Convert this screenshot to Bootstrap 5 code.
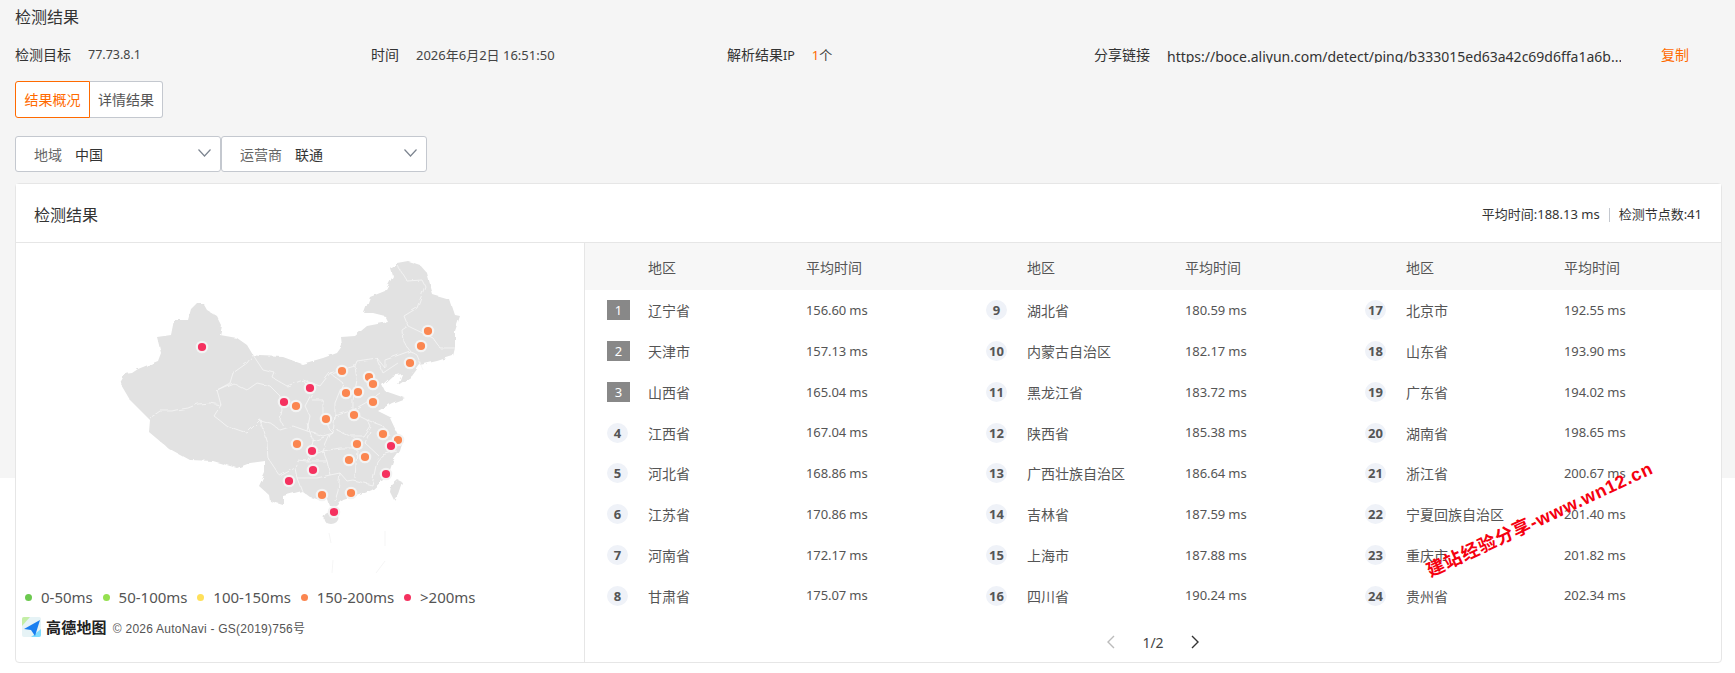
<!doctype html>
<html lang="zh-CN">

<head>
  <meta charset="utf-8" />
  <meta name="viewport" content="width=device-width, initial-scale=1" />
  <title>检测结果</title>
  <link href="https://cdn.jsdelivr.net/npm/bootstrap@5.3.5/dist/css/bootstrap.min.css" rel="stylesheet" />
  <style>
    body {
      width: 1735px;
      height: 673px;
      overflow: hidden;
      position: relative;
      background: linear-gradient(#f5f5f5 478px, #fff 478px);
      font-family: "Noto Sans", "Noto Sans CJK SC", sans-serif;
      font-size: 14px;
      color: #333;
    }

    .page-wrap { padding: 5px 13px 0 15px; }
    .page-title { font-size: 16px; line-height: 24px; height: 24px; margin-bottom: 14px; }

    .info-row { height: 24px; line-height: 24px; margin-bottom: 14px; }
    .info-cell { width: 356px; display: flex; }
    .info-key { margin-right: 17px; }
    .info-key small { font-size: 12.5px; }
    .info-val { font-size: 13px; color: #444; }
    .info-val.ip-val { font-size: 12.5px; }
    .orange-num { color: #ff6a00; }
    .info-cell.share { width: 600px; margin-left: 11px; }
    .share-url {
      width: 454px;
      height: 17px;
      line-height: 21px;
      margin-top: 3px;
      overflow: hidden;
      white-space: nowrap;
      color: #333;
    }
    .copy-link { color: #ff6a00; margin-left: 40px; text-decoration: none; }

    .tab-btn {
      height: 37px;
      width: 73px;
      padding: 0;
      font-size: 14px;
      line-height: 35px;
      text-align: center;
      background: #fff;
      border: 1px solid #c4c8cf;
      color: #555;
    }
    .tab-btn.on { width: 75px; border-color: #ff6a00; color: #ff6a00; border-radius: 3px 0 0 3px; }
    .tab-btn.off { border-left: 0; border-radius: 0 3px 3px 0; }

    .filter-row { margin-top: 18px; margin-bottom: 11px; }
    .filter-box {
      width: 206px;
      height: 36px;
      background: #fff;
      border: 1px solid #c4c8cf;
      border-radius: 3px;
      padding-left: 18px;
      display: flex;
      align-items: center;
      position: relative;
    }
    .filter-key { color: #666; margin-right: 13px; }
    .filter-val { color: #333; }
    .filter-arrow { position: absolute; right: 9px; top: 12px; }

    .result-card { height: 480px; border-color: #e6e6e6; border-radius: 4px; width: 1707px; }
    .result-head {
      height: 61px;
      padding: 4px 19px 0 18px;
      background: #fff;
      border-bottom: 1px solid #e6e6e6;
    }
    .result-title { font-size: 16px; }
    .result-stat { font-size: 13px; color: #333; }
    .stat-sep { width: 1px; height: 14px; background: #c4c8cf; margin: 0 9px; }

    .map-side { width: 569px; border-right: 1px solid #e6e6e6; flex: none; }
    .map-svg { display: block; overflow: visible; }
    .legend-row { height: 36px; padding: 2px 0 0 9px; font-size: 15px; color: #555; }
    .legend-dot { width: 7px; height: 7px; border-radius: 50%; margin-right: 9px; }
    .legend-item { display: flex; align-items: center; margin-right: 9.8px; }
    .dot-a { background: #6cc94f; }
    .dot-b { background: #95e04f; }
    .dot-c { background: #ffe05a; }
    .dot-d { background: #fb8650; }
    .dot-e { background: #f5315f; }
    .amap-row { padding-left: 6px; height: 26px; }
    .amap-name { font-weight: 700; font-size: 15px; color: #222; margin: 0 6px 0 5px; letter-spacing: .2px; }
    .amap-copy { font-family: "Liberation Sans", sans-serif; font-size: 12px; color: #555; letter-spacing: .25px; margin-top: 4px; }

    .list-side { flex: 1 1 auto; min-width: 0; }
    .list-head { height: 47px; background: #f7f7f7; padding-left: 22px; }
    .list-line { height: 40.75px; padding-left: 22px; }
    .rank-cell { width: 379px; display: flex; align-items: center; flex: none; }
    .rank-slot { width: 41px; flex: none; }
    .rank-name { width: 158px; flex: none; color: #555; padding-top: 1px; }
    .rank-time { font-size: 13px; color: #555; letter-spacing: -.1px; padding-top: 1px; }
    .rank-sq, .rank-dot {
      display: block;
      height: 20px;
      line-height: 20px;
      text-align: center;
      font-size: 13px;
    }
    .rank-sq { width: 23px; background: #888; color: #fff; }
    .rank-dot { width: 21px; border-radius: 50%; background: #eff2f8; color: #555; font-weight: 700; }

    .pager-row { height: 46px; padding-top: 6px; gap: 27px; }
    .pager-num { font-size: 14px; color: #444; }

    .stamp {
      position: absolute;
      left: 1540px;
      top: 520px;
      transform: translate(-50%, -50%) rotate(-25deg);
      white-space: nowrap;
      color: #f5000f;
      font-family: "Liberation Sans", "Noto Sans CJK SC", sans-serif;
      font-size: 18px;
      font-weight: 700;
      letter-spacing: .9px;
    }
  </style>
</head>

<body>
  <div class="page-wrap">
    <div class="page-title">检测结果</div>

    <div class="info-row d-flex">
      <div class="info-cell"><span class="info-key">检测目标</span><span class="info-val ip-val">77.73.8.1</span></div>
      <div class="info-cell"><span class="info-key">时间</span><span class="info-val">2026年6月2日 16:51:50</span></div>
      <div class="info-cell"><span class="info-key">解析结果<small>IP</small></span><span class="info-val"><span class="orange-num">1</span>个</span></div>
      <div class="info-cell share">
        <span class="info-key">分享链接</span>
        <div class="share-url">https://boce.aliyun.com/detect/ping/b333015ed63a42c69d6ffa1a6b...</div>
        <a class="copy-link" href="#">复制</a>
      </div>
    </div>

    <div class="d-flex">
      <button class="tab-btn on" type="button">结果概况</button>
      <button class="tab-btn off" type="button">详情结果</button>
    </div>

    <div class="d-flex filter-row">
      <div class="filter-box">
        <span class="filter-key">地域</span><span class="filter-val">中国</span>
        <svg class="filter-arrow" width="13" height="8" viewBox="0 0 13 8"><path d="M.5.5l6 6.5 6-6.5" fill="none" stroke="#7d8590" stroke-width="1.2"/></svg>
      </div>
      <div class="filter-box">
        <span class="filter-key">运营商</span><span class="filter-val">联通</span>
        <svg class="filter-arrow" width="13" height="8" viewBox="0 0 13 8"><path d="M.5.5l6 6.5 6-6.5" fill="none" stroke="#7d8590" stroke-width="1.2"/></svg>
      </div>
    </div>

    <div class="card result-card">
      <div class="result-head d-flex align-items-center justify-content-between">
        <span class="result-title">检测结果</span>
        <span class="result-stat d-flex align-items-center">平均时间:188.13 ms<i class="stat-sep"></i>检测节点数:41</span>
      </div>

      <div class="d-flex flex-grow-1">
        <div class="map-side">
          <svg class="map-svg" width="568" height="335" viewBox="16 245 568 335">
            <defs>
              <filter id="rough" x="-5%" y="-5%" width="110%" height="110%">
                <feTurbulence type="fractalNoise" baseFrequency=".13" numOctaves="2" seed="4"/>
                <feDisplacementMap in="SourceGraphic" scale="4"/>
              </filter>
            </defs>
            <g filter="url(#rough)">
              <path fill="#e2e2e2" d="M120 385 125 376 132 375 138 371 158 363 161 355 157 339 171 337 174 322 188 322 191 311 197 305 203 305 207 312 217 318 222 328 220 337 237 340 247 347 253 357 260 358 283 359 302 366 323 360 337 355 342 348 341 339 355 338 367 328 388 324 385 318 373 315 364 315 370 299 385 293 393 278 391 271 397 265 408 263 420 267 427 275 433 297 450 302 455 317 460 318 455 333 455 350 453 358 437 363 420 367 412 378 398 387 402 376 392 378 382 387 385 393 405 400 392 405 378 413 392 420 390 420 398 437 403 443 400 453 393 463 390 472 383 482 372 492 360 497 343 502 337 508 330 508 328 502 320 502 310 499 302 493 283 498 283 507 270 503 269 497 259 488 265 475 265 463 250 465 237 470 213 463 190 462 168 450 149 434 150 422 130 402Z"/>
              <ellipse cx="331" cy="520" rx="7.5" ry="6" fill="#e2e2e2"/>
              <path fill="#e2e2e2" d="M398 482 402 484 398 496 394 502 390 494 391 488Z"/>
              <g fill="none" stroke="#f6f6f6" stroke-width=".8" stroke-linejoin="round">
                <path d="M150 420 160 413 172 413 176 412 188 410 198 406 210 405 221 407 214 418 227 428 247 435 260 422 267 445 268 462"/>
                <path d="M217 392 230 385 233 375 247 365 253 357 263 372 275 375 273 380 287 388 303 382 312 395 305 408 310 418 307 433"/>
                <path d="M221 407 217 392 233 385 247 392 257 385 270 388 280 398 282 412 280 422 283 428"/>
                <path d="M260 422 270 425 280 432 293 428 307 433 323 438 333 435"/>
                <path d="M312 402 323 402 323 418 330 432 333 435 330 437 323 453 327 463 330 477 340 475 347 483 353 482 372 487 377 463 382 457 397 453"/>
                <path d="M303 382 320 388 330 375 355 368 357 363 377 360 383 375 398 365"/>
                <path d="M335 422 335 405 343 385 330 375"/>
                <path d="M355 368 357 382 353 402 353 412 335 418 333 435"/>
                <path d="M353 415 367 422 370 428 363 438 350 438 337 432"/>
                <path d="M353 412 367 404 380 395"/>
                <path d="M367 422 383 428 390 438"/>
                <path d="M370 433 365 445 378 457"/>
                <path d="M323 453 340 450 363 450"/>
                <path d="M357 452 355 480"/>
                <path d="M297 480 317 480 330 477"/>
                <path d="M340 475 338 493 335 503"/>
                <path d="M295 470 297 462 307 463 327 463"/>
                <path d="M268 460 280 478 295 470 297 480 302 493"/>
                <path d="M307 463 310 458 323 453"/>
                <path d="M313 443 330 437"/>
                <path d="M307 425 313 443 310 458"/>
                <path d="M397 267 407 283 422 282 425 288 417 310 404 318 408 328 433 340 440 350 455 350"/>
                <path d="M408 328 402 332 403 343 410 353 417 357 423 372"/>
                <path d="M410 353 385 362 385 370 377 360"/>
              </g>
            </g>
            <g fill="none" stroke="#f3f3f3" stroke-width=".8">
              <path d="M329 535 331 545"/>
              <path d="M385 533 385 548"/>
              <path d="M333 562 332 575"/>
              <path d="M385 563 376 575"/>
            </g>
            <g fill="#fb8650" stroke="#f3f3f3" stroke-width="2.2">
              <circle cx="296" cy="408" r="5.2"/><circle cx="326" cy="421" r="5.2"/><circle cx="354" cy="417" r="5.2"/>
              <circle cx="373" cy="404" r="5.2"/><circle cx="383" cy="436" r="5.2"/><circle cx="398" cy="442" r="5.2"/>
              <circle cx="357" cy="446" r="5.2"/><circle cx="297" cy="446" r="5.2"/><circle cx="365" cy="459" r="5.2"/>
              <circle cx="349" cy="462" r="5.2"/><circle cx="351" cy="495" r="5.2"/><circle cx="322" cy="497" r="5.2"/>
              <circle cx="428" cy="333" r="5.2"/><circle cx="421" cy="348" r="5.2"/><circle cx="410" cy="365" r="5.2"/>
              <circle cx="342" cy="373" r="5.2"/><circle cx="369" cy="379" r="5.2"/><circle cx="373" cy="386" r="5.2"/>
              <circle cx="346" cy="395" r="5.2"/><circle cx="358" cy="394" r="5.2"/>
            </g>
            <g fill="#f5315f" stroke="#f3f3f3" stroke-width="2.2">
              <circle cx="202" cy="349" r="5.2"/><circle cx="310" cy="390" r="5.2"/><circle cx="284" cy="404" r="5.2"/>
              <circle cx="391" cy="448" r="5.2"/><circle cx="312" cy="453" r="5.2"/><circle cx="313" cy="472" r="5.2"/>
              <circle cx="386" cy="476" r="5.2"/><circle cx="289" cy="483" r="5.2"/><circle cx="334" cy="514" r="5.2"/>
            </g>
          </svg>

          <div class="legend-row d-flex align-items-center">
            <div class="legend-item"><i class="legend-dot dot-a"></i>0-50ms</div>
            <div class="legend-item"><i class="legend-dot dot-b"></i>50-100ms</div>
            <div class="legend-item"><i class="legend-dot dot-c"></i>100-150ms</div>
            <div class="legend-item"><i class="legend-dot dot-d"></i>150-200ms</div>
            <div class="legend-item"><i class="legend-dot dot-e"></i>&gt;200ms</div>
          </div>

          <div class="amap-row d-flex align-items-center">
            <svg width="19" height="20" viewBox="0 0 19 20">
              <rect width="19" height="20" rx="2" fill="#e6f3f6"/>
              <path d="M0 2a2 2 0 0 1 2-2h6L0 9z" fill="#c4eea6"/>
              <path d="M19 12v6a2 2 0 0 1-2 2H9z" fill="#7edcff"/>
              <path d="M2 12 18 3 13 19 9 13z" fill="#1a7ff0"/>
            </svg>
            <span class="amap-name">高德地图</span>
            <span class="amap-copy">© 2026 AutoNavi - GS(2019)756号</span>
          </div>
        </div>

        <div class="list-side">
          <div class="list-head d-flex align-items-center">
            <div class="rank-cell"><span class="rank-slot"></span><span class="rank-name">地区</span><span class="rank-name">平均时间</span></div>
            <div class="rank-cell"><span class="rank-slot"></span><span class="rank-name">地区</span><span class="rank-name">平均时间</span></div>
            <div class="rank-cell"><span class="rank-slot"></span><span class="rank-name">地区</span><span class="rank-name">平均时间</span></div>
          </div>

          <div class="list-line d-flex">
            <div class="rank-cell"><span class="rank-slot"><b class="rank-sq fw-normal">1</b></span><span class="rank-name">辽宁省</span><span class="rank-time">156.60 ms</span></div>
            <div class="rank-cell"><span class="rank-slot"><b class="rank-dot">9</b></span><span class="rank-name">湖北省</span><span class="rank-time">180.59 ms</span></div>
            <div class="rank-cell"><span class="rank-slot"><b class="rank-dot">17</b></span><span class="rank-name">北京市</span><span class="rank-time">192.55 ms</span></div>
          </div>
          <div class="list-line d-flex">
            <div class="rank-cell"><span class="rank-slot"><b class="rank-sq fw-normal">2</b></span><span class="rank-name">天津市</span><span class="rank-time">157.13 ms</span></div>
            <div class="rank-cell"><span class="rank-slot"><b class="rank-dot">10</b></span><span class="rank-name">内蒙古自治区</span><span class="rank-time">182.17 ms</span></div>
            <div class="rank-cell"><span class="rank-slot"><b class="rank-dot">18</b></span><span class="rank-name">山东省</span><span class="rank-time">193.90 ms</span></div>
          </div>
          <div class="list-line d-flex">
            <div class="rank-cell"><span class="rank-slot"><b class="rank-sq fw-normal">3</b></span><span class="rank-name">山西省</span><span class="rank-time">165.04 ms</span></div>
            <div class="rank-cell"><span class="rank-slot"><b class="rank-dot">11</b></span><span class="rank-name">黑龙江省</span><span class="rank-time">183.72 ms</span></div>
            <div class="rank-cell"><span class="rank-slot"><b class="rank-dot">19</b></span><span class="rank-name">广东省</span><span class="rank-time">194.02 ms</span></div>
          </div>
          <div class="list-line d-flex">
            <div class="rank-cell"><span class="rank-slot"><b class="rank-dot">4</b></span><span class="rank-name">江西省</span><span class="rank-time">167.04 ms</span></div>
            <div class="rank-cell"><span class="rank-slot"><b class="rank-dot">12</b></span><span class="rank-name">陕西省</span><span class="rank-time">185.38 ms</span></div>
            <div class="rank-cell"><span class="rank-slot"><b class="rank-dot">20</b></span><span class="rank-name">湖南省</span><span class="rank-time">198.65 ms</span></div>
          </div>
          <div class="list-line d-flex">
            <div class="rank-cell"><span class="rank-slot"><b class="rank-dot">5</b></span><span class="rank-name">河北省</span><span class="rank-time">168.86 ms</span></div>
            <div class="rank-cell"><span class="rank-slot"><b class="rank-dot">13</b></span><span class="rank-name">广西壮族自治区</span><span class="rank-time">186.64 ms</span></div>
            <div class="rank-cell"><span class="rank-slot"><b class="rank-dot">21</b></span><span class="rank-name">浙江省</span><span class="rank-time">200.67 ms</span></div>
          </div>
          <div class="list-line d-flex">
            <div class="rank-cell"><span class="rank-slot"><b class="rank-dot">6</b></span><span class="rank-name">江苏省</span><span class="rank-time">170.86 ms</span></div>
            <div class="rank-cell"><span class="rank-slot"><b class="rank-dot">14</b></span><span class="rank-name">吉林省</span><span class="rank-time">187.59 ms</span></div>
            <div class="rank-cell"><span class="rank-slot"><b class="rank-dot">22</b></span><span class="rank-name">宁夏回族自治区</span><span class="rank-time">201.40 ms</span></div>
          </div>
          <div class="list-line d-flex">
            <div class="rank-cell"><span class="rank-slot"><b class="rank-dot">7</b></span><span class="rank-name">河南省</span><span class="rank-time">172.17 ms</span></div>
            <div class="rank-cell"><span class="rank-slot"><b class="rank-dot">15</b></span><span class="rank-name">上海市</span><span class="rank-time">187.88 ms</span></div>
            <div class="rank-cell"><span class="rank-slot"><b class="rank-dot">23</b></span><span class="rank-name">重庆市</span><span class="rank-time">201.82 ms</span></div>
          </div>
          <div class="list-line d-flex">
            <div class="rank-cell"><span class="rank-slot"><b class="rank-dot">8</b></span><span class="rank-name">甘肃省</span><span class="rank-time">175.07 ms</span></div>
            <div class="rank-cell"><span class="rank-slot"><b class="rank-dot">16</b></span><span class="rank-name">四川省</span><span class="rank-time">190.24 ms</span></div>
            <div class="rank-cell"><span class="rank-slot"><b class="rank-dot">24</b></span><span class="rank-name">贵州省</span><span class="rank-time">202.34 ms</span></div>
          </div>

          <div class="pager-row d-flex align-items-center justify-content-center">
            <svg width="9" height="14" viewBox="0 0 9 14"><path d="M8 1 2 7l6 6" fill="none" stroke="#bbb" stroke-width="1.4"/></svg>
            <span class="pager-num">1/2</span>
            <svg width="9" height="14" viewBox="0 0 9 14"><path d="M1 1l6 6-6 6" fill="none" stroke="#333" stroke-width="1.4"/></svg>
          </div>
        </div>
      </div>
    </div>
  </div>

  <div class="stamp">建站经验分享-www.wn12.cn</div>

  <script src="https://cdn.jsdelivr.net/npm/bootstrap@5.3.5/dist/js/bootstrap.bundle.min.js"></script>
</body>

</html>
